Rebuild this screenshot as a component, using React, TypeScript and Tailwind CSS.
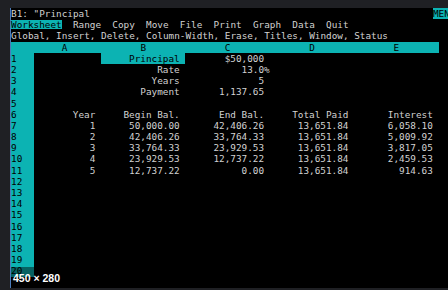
import React from 'react';

type Row = { n: number; cells: string[]; hi?: number; pct?: boolean };

const rows: Row[] = [
  { n: 1, cells: ['', 'Principal', '$50,000', '', ''], hi: 1 },
  { n: 2, cells: ['', 'Rate', '13.0%', '', ''], pct: true },
  { n: 3, cells: ['', 'Years', '5', '', ''] },
  { n: 4, cells: ['', 'Payment', '1,137.65', '', ''] },
  { n: 5, cells: ['', '', '', '', ''] },
  { n: 6, cells: ['Year', 'Begin Bal.', 'End Bal.', 'Total Paid', 'Interest'] },
  { n: 7, cells: ['1', '50,000.00', '42,406.26', '13,651.84', '6,058.10'] },
  { n: 8, cells: ['2', '42,406.26', '33,764.33', '13,651.84', '5,009.92'] },
  { n: 9, cells: ['3', '33,764.33', '23,929.53', '13,651.84', '3,817.05'] },
  { n: 10, cells: ['4', '23,929.53', '12,737.22', '13,651.84', '2,459.53'] },
  { n: 11, cells: ['5', '12,737.22', '0.00', '13,651.84', '914.63'] },
];
for (let i = 12; i <= 20; i++) rows.push({ n: i, cells: ['', '', '', '', ''] });

const widths = ['w-[67.5px]', 'w-[84.375px]', 'w-[84.375px]', 'w-[84.375px]', 'w-[84.375px]'];

function Line({ children }: { children: React.ReactNode }) {
  return <div className="h-[11.2px] leading-[11.2px] whitespace-pre flex">{children}</div>;
}

export default function App() {
  return (
    <div className="w-[448px] h-[290px] bg-[#1f2024] overflow-hidden pt-[8px] pl-[10px]">
      <div
        className="relative w-[450px] h-[280px] bg-black border-l border-[#4b7cba] text-[#d2d2d2] text-[9.35px]"
        style={{ fontFamily: '"DejaVu Sans Mono", "Liberation Mono", monospace' }}
      >
        <Line>
          <span className="w-[421.875px] shrink-0">B1: "Principal</span>
          <span className="bg-[#0cb3b3] text-black shrink-0">MENU</span>
        </Line>
        <Line>
          <span className="bg-[#0cb3b3] text-black inline-block h-[9px] leading-[9px] mt-[1px]">Worksheet</span>
          <span>  Range  Copy  Move  File  Print  Graph  Data  Quit</span>
        </Line>
        <Line>
          <span>Global, Insert, Delete, Column-Width, Erase, Titles, Window, Status</span>
        </Line>
        <Line>
          <span className="w-[22.5px] bg-[#0cb3b3]" />
          <span className="w-[67.5px] bg-[#0cb3b3] text-black">{'     A'}</span>
          <span className="w-[84.375px] bg-[#0cb3b3] text-black">{'       B'}</span>
          <span className="w-[84.375px] bg-[#0cb3b3] text-black">{'       C'}</span>
          <span className="w-[84.375px] bg-[#0cb3b3] text-black">{'       D'}</span>
          <span className="w-[84.375px] bg-[#0cb3b3] text-black">{'       E'}</span>
        </Line>
        {rows.map((r) => (
          <Line key={r.n}>
            <span className="w-[22.5px] bg-[#0cb3b3] text-black">{r.n}</span>
            {r.cells.map((c, i) => (
              <span
                key={i}
                className={`${widths[i]} text-right ${r.hi === i ? 'bg-[#0cb3b3] text-black' : ''} ${
                  r.pct && i === 2 ? 'pr-0' : 'pr-[5.625px]'
                }`}
              >
                {c}
              </span>
            ))}
          </Line>
        ))}
        <div
          className="absolute left-0 bottom-[1px] h-[20px] w-[54px] bg-black/45 pl-[2px] pt-[5px] text-white text-[10.5px] font-bold leading-[12px]"
          style={{ fontFamily: '"Liberation Sans", Arial, sans-serif' }}
        >
          450 × 280
        </div>
      </div>
    </div>
  );
}
